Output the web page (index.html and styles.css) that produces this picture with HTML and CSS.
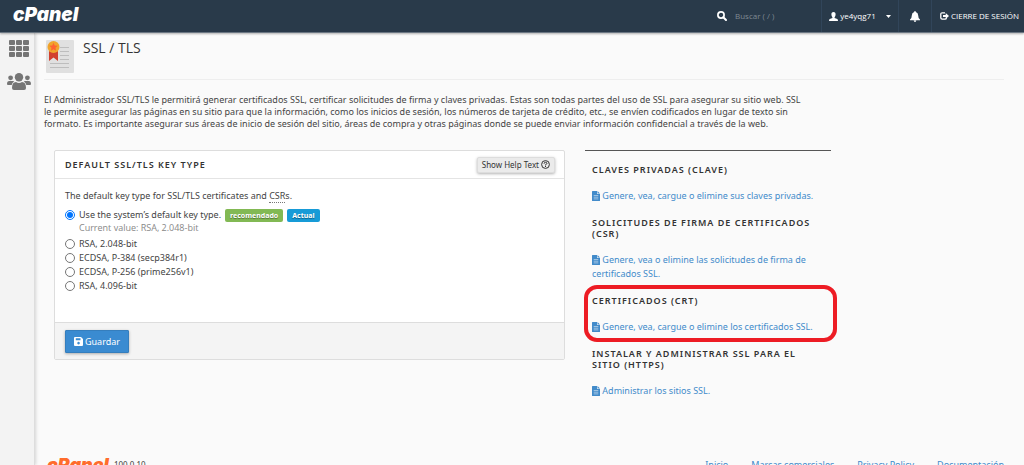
FILE: index.html
```html
<!DOCTYPE html>
<html lang="es">
<head>
<meta charset="utf-8">
<meta name="viewport" content="width=device-width, initial-scale=1">
<title>SSL / TLS</title>
<link rel="stylesheet" href="styles.css">
</head>
<body>
<svg class="sprite" aria-hidden="true">
  <symbol id="doc" viewBox="0 0 8 10"><path fill="currentColor" d="M0 .6Q0 0 .6 0H5v3h3v6.400q0 .6-.6.6H.6Q0 10 0 9.400z"/><path fill="currentColor" d="M5.500 0 8 2.500H5.500z"/><path stroke="#fafafa" stroke-width=".5" d="M1.700 4.500h4.600M1.700 6.200h4.600M1.700 7.900h4.600"/></symbol>
</svg>
<header class="topbar">
  <a class="logo" href="#">cPanel</a>
  <label class="search">
    <svg width="10" height="10" viewBox="0 0 10 10" fill="none" stroke="#fff"><circle cx="4" cy="4" r="3.100" stroke-width="1.700"/><path d="M6.300 6.300 9 9" stroke-width="2" stroke-linecap="round"/></svg>
    <input type="text" placeholder="Buscar ( / )" aria-label="Buscar">
  </label>
  <button class="top-item user" type="button">
    <svg width="9" height="9" viewBox="0 0 9 9" fill="#fff"><path d="M4.500 0C6 0 6.700 1 6.600 2.600 6.500 4 6 4.700 5.600 5.200v.7L8.300 7Q9 7.400 9 9H0q0-1.600.7-2l2.700-1.100v-.7C3 4.700 2.500 4 2.400 2.600 2.300 1 3 0 4.500 0z"/></svg>
    <span>ye4yqg71</span>
    <svg class="caret" width="5" height="3" viewBox="0 0 5 3" fill="#fff"><path d="M0 0h5L2.500 3z"/></svg>
  </button>
  <button class="top-item bell" type="button" aria-label="Notificaciones">
    <svg width="10" height="11" viewBox="0 0 10 11" fill="#fff"><path d="M5 0q.8 0 .8.900Q8.200 1.500 8.200 4.500q0 3 1.800 4V9.200H0v-.7q1.800-1 1.800-4 0-3 2.400-3.600Q4.200 0 5 0zM3.700 9.600h2.600Q6.200 11 5 11T3.700 9.600z"/></svg>
  </button>
  <a class="top-item logout" href="#">
    <svg width="9" height="8" viewBox="0 0 9 8" fill="none" stroke="#fff"><path stroke-width="1.300" d="M5 .8H2.200Q.8.8.8 2.200v3.600q0 1.400 1.400 1.400H5Q6.300 7.200 6.300 6"/><path fill="#fff" stroke="none" d="M3 3h2.700V1L9 4 5.700 7V5H3z"/></svg>
    <span>CIERRE DE SESIÓN</span>
  </a>
</header>
<div class="shell">
  <nav class="sidebar">
    <a href="#" aria-label="Herramientas">
      <svg width="20" height="17" viewBox="0 0 20 17" fill="#757575"><rect width="6" height="5" rx="1"/><rect x="7" width="6" height="5" rx="1"/><rect x="14" width="6" height="5" rx="1"/><rect y="6" width="6" height="5" rx="1"/><rect x="7" y="6" width="6" height="5" rx="1"/><rect x="14" y="6" width="6" height="5" rx="1"/><rect y="12" width="6" height="5" rx="1"/><rect x="7" y="12" width="6" height="5" rx="1"/><rect x="14" y="12" width="6" height="5" rx="1"/></svg>
    </a>
    <a href="#" aria-label="Usuarios">
      <svg width="24" height="17" viewBox="0 0 24 17" fill="#757575"><circle cx="12" cy="4.200" r="4.200"/><circle cx="3.600" cy="4.800" r="2.400"/><circle cx="20.400" cy="4.800" r="2.400"/><path d="M5 15q0-6 4-6 1.300 1 3 1t3-1q4 0 4 6 0 2-2 2H7q-2 0-2-2zM0 11q0-3 2.300-3H6q.8 0 1.200.5Q5 9.800 4.700 12H1q-1 0-1-1zM24 11q0-3-2.300-3H18q-.8 0-1.200.5 2.200 1.300 2.500 3.500H23q1 0 1-1z"/></svg>
    </a>
  </nav>
  <main class="content">
    <div class="title">
      <svg width="28" height="34" viewBox="0 0 28 34"><rect width="28" height="33" y="1" rx="1" fill="#e0e0e0"/><path stroke="#bdbdbd" d="M14 8.500h9M14 12.500h9M14 16.500h9M14 20.500h9M4 24.500h19M4 28.500h19"/><path fill="#d2402f" d="M3 12h9v10l-4.500-3.500L3 22z"/><circle cx="7.500" cy="8" r="6" fill="#f0a52c"/><path fill="#ff6331" d="m7.500 3.800 1.200 2.700 3 .3-2.200 2 .6 3-2.600-1.500-2.600 1.500.6-3-2.200-2 3-.3z"/></svg>
      <h1>SSL / TLS</h1>
    </div>
    <p class="intro">El Administrador SSL/TLS le permitirá generar certificados SSL, certificar solicitudes de firma y claves privadas. Estas son todas partes del uso de SSL para asegurar su sitio web. SSL le permite asegurar las páginas en su sitio para que la información, como los inicios de sesión, los números de tarjeta de crédito, etc., se envíen codificados en lugar de texto sin formato. Es importante asegurar sus áreas de inicio de sesión del sitio, áreas de compra y otras páginas donde se puede enviar información confidencial a través de la web.</p>
    <div class="columns">
      <form class="panel">
        <div class="panel-head">
          <h2>DEFAULT SSL/TLS KEY TYPE</h2>
          <button class="help" type="button">Show Help Text
            <svg width="9" height="9" viewBox="0 0 9 9" fill="none" stroke="#333"><circle cx="4.500" cy="4.500" r="3.900"/><path d="M3.100 3.700Q3.100 2.300 4.500 2.300T5.900 3.500Q5.900 4.200 4.500 4.700v.7M4.500 6v1"/></svg>
          </button>
        </div>
        <div class="panel-body">
          <p>The default key type for SSL/TLS certificates and <abbr title="Certificate Signing Request">CSR</abbr>s.</p>
          <div class="choice">
            <input type="radio" name="key" id="k0" checked>
            <label for="k0">Use the system’s default key type.</label>
            <span class="tag green">recomendado</span><span class="tag blue">Actual</span>
          </div>
          <div class="current">Current value: RSA, 2.048-bit</div>
          <div class="choice"><input type="radio" name="key" id="k1"><label for="k1">RSA, 2.048-bit</label></div>
          <div class="choice"><input type="radio" name="key" id="k2"><label for="k2">ECDSA, P-384 (secp384r1)</label></div>
          <div class="choice"><input type="radio" name="key" id="k3"><label for="k3">ECDSA, P-256 (prime256v1)</label></div>
          <div class="choice"><input type="radio" name="key" id="k4"><label for="k4">RSA, 4.096-bit</label></div>
        </div>
        <div class="panel-foot">
          <button class="save" type="submit">
            <svg width="9" height="9" viewBox="0 0 9 9"><path fill="#fff" fill-rule="evenodd" d="M1 0h6l2 2v6q0 1-1 1H1Q0 9 0 8V1q0-1 1-1zm.8 1.300v2h4.700v-2zM4.500 4.800a1.300 1.300 0 1 0 .1 0z"/></svg>
            Guardar</button>
        </div>
      </form>
      <aside class="links">
        <section>
          <h3>CLAVES PRIVADAS (CLAVE)</h3>
          <a href="#"><svg class="doc"><use href="#doc"/></svg> Genere, vea, cargue o elimine sus claves privadas.</a>
        </section>
        <section>
          <h3>SOLICITUDES DE FIRMA DE CERTIFICADOS (CSR)</h3>
          <a href="#"><svg class="doc"><use href="#doc"/></svg> Genere, vea o elimine las solicitudes de firma de certificados SSL.</a>
        </section>
        <section class="marked">
          <h3>CERTIFICADOS (CRT)</h3>
          <a href="#"><svg class="doc"><use href="#doc"/></svg> Genere, vea, cargue o elimine los certificados SSL.</a>
        </section>
        <section>
          <h3>INSTALAR Y ADMINISTRAR SSL PARA EL SITIO (HTTPS)</h3>
          <a href="#"><svg class="doc"><use href="#doc"/></svg> Administrar los sitios SSL.</a>
        </section>
      </aside>
    </div>
    <footer class="footer">
      <a class="logo" href="#">cPanel</a>
      <span class="version">100.0.10</span>
      <nav>
        <a href="#">Inicio</a>
        <a href="#">Marcas comerciales</a>
        <a href="#">Privacy Policy</a>
        <a href="#">Documentación</a>
      </nav>
    </footer>
  </main>
</div>
</body>
</html>
```
FILE: styles.css
```css
* { box-sizing: border-box; }
html { height: 100%; overflow: hidden; }
body {
  margin: 0;
  height: 100%;
  display: flex;
  flex-direction: column;
  overflow: hidden;
  background: #fafafa;
  color: #444;
  font: 9px/12px "Noto Sans", "Open Sans", sans-serif;
}
h1, h2, h3, p { margin: 0; font-weight: 400; }
a { color: #428bca; text-decoration: none; }
button, input { font: inherit; color: inherit; }
svg { flex: none; }
.sprite { position: absolute; width: 0; height: 0; }

.topbar {
  display: flex;
  flex: none;
  align-items: stretch;
  height: 33px;
  background: #293a4a;
  border-bottom: 1px solid #6b7783;
  box-shadow: 0 1px 2px rgba(0, 0, 0, .3);
  position: relative;
  color: #fff;
  font-family: "Open Sans", "Noto Sans", sans-serif;
  font-size: 8px;
}
.logo {
  font: italic 900 19px/30px Inter, sans-serif;
  color: #fff;
}
.topbar .logo { margin: 0 auto 0 13px; }
.search { display: flex; align-items: center; width: 104px; gap: 8px; }
.search input {
  width: 80px;
  padding: 0;
  border: 0;
  outline: 0;
  background: none;
}
.search input::placeholder { color: #7f8992; opacity: 1; }
.top-item {
  display: flex;
  align-items: center;
  justify-content: center;
  gap: 2px;
  padding: 0 8px;
  border: 0;
  border-left: 1px solid #31455a;
  background: none;
  color: #fff;
}
.user { width: 77px; }
.caret { margin-left: 8px; }
.bell { width: 33px; }
.logout { width: 93px; padding: 0 4px 0 7px; }

.shell { display: flex; flex: 1; min-height: 0; }
.sidebar {
  display: flex;
  flex: none;
  flex-direction: column;
  align-items: center;
  gap: 16px;
  width: 35px;
  padding: 7px 0 0 3px;
  background: #f3f3f3;
  border-right: 1px solid #ddd;
  box-shadow: 1px 0 3px rgba(0, 0, 0, .15);
}
.sidebar a { display: flex; }
.content { flex: 1; min-width: 0; padding: 6px 20px 0 9px; }
.title {
  display: flex;
  gap: 9px;
  height: 41px;
  padding-left: 2px;
  border-bottom: 1px solid #eee;
}
.title h1 { font-family: "Open Sans", sans-serif; font-size: 14px; line-height: 18px; color: #333; }
.intro { max-width: 760px; padding: 14px 0 20px; }

.columns {
  display: grid;
  grid-template-columns: minmax(0, 1fr) 246px;
  gap: 20px;
  align-items: start;
  max-width: 787px;
  padding-left: 10px;
}
.panel {
  background: #fff;
  border: 1px solid #ddd;
  border-radius: 2px;
}
.panel-head {
  display: flex;
  align-items: center;
  justify-content: space-between;
  height: 28px;
  padding: 0 9px 0 10px;
  border-bottom: 1px solid #e4e4e4;
}
h2, h3 { color: #333; font-size: 9px; font-weight: 600; letter-spacing: 1px; }
.help {
  display: flex;
  align-items: center;
  gap: 2px;
  height: 16px;
  padding: 0 4px;
  border: 1px solid #ddd;
  border-radius: 2px;
  background: #ebebeb;
  box-shadow: 0 1px 3px rgba(0, 0, 0, .3);
  font-size: 8px;
  color: #333;
}
.panel-body { padding: 10px 10px 29px; line-height: 14px; }
.panel-body p { margin-bottom: 5px; }
.panel-body abbr { text-decoration: none; border-bottom: 1px dotted #777; }
.choice { display: flex; align-items: center; gap: 4px; min-height: 14px; }
.choice input { width: 10px; height: 10px; margin: 0; }
.current { margin-bottom: 3px; padding-left: 14px; color: #888; font-family: "Open Sans", sans-serif; line-height: 12px; }
.tag {
  padding: 0 5px;
  border-radius: 2px;
  color: #fff;
  font-size: 7px;
  font-weight: 700;
  line-height: 13px;
  text-shadow: 0 1px 1px rgba(0, 0, 0, .4);
}
.green { background: #82b954; }
.blue { background: #179bd7; }
.panel-foot { padding: 7px 10px 6px; background: #f4f4f4; border-top: 1px solid #ddd; }
.save {
  display: flex;
  align-items: center;
  gap: 2px;
  height: 23px;
  padding: 0 8px;
  border: 1px solid #357ebd;
  border-radius: 1px;
  background: #3a8bd1;
  box-shadow: 0 1px 3px rgba(0, 0, 0, .3);
  color: #fff;
}
.links {
  display: flex;
  flex-direction: column;
  gap: 14px;
  padding: 13px 7px 0;
  border-top: 1px solid #555;
  line-height: 14px;
}
.links section { position: relative; }
.links h3 { margin-bottom: 14px; line-height: 11px; }
.links a { display: block; }
.doc { width: 8px; height: 10px; vertical-align: -2px; }
.marked::after {
  content: "";
  position: absolute;
  inset: -10px -13px -8px -8px;
  border: 4px solid #ed1c24;
  border-radius: 13px;
  pointer-events: none;
}
.footer { display: flex; align-items: flex-start; gap: 5px; padding: 52px 0 0 3px; }
.footer .logo { color: #ff6c2c; font-size: 18px; }
.version { padding-top: 9px; font-size: 8px; }
.footer nav { display: flex; gap: 23px; margin-left: auto; padding-top: 9px; }
```
